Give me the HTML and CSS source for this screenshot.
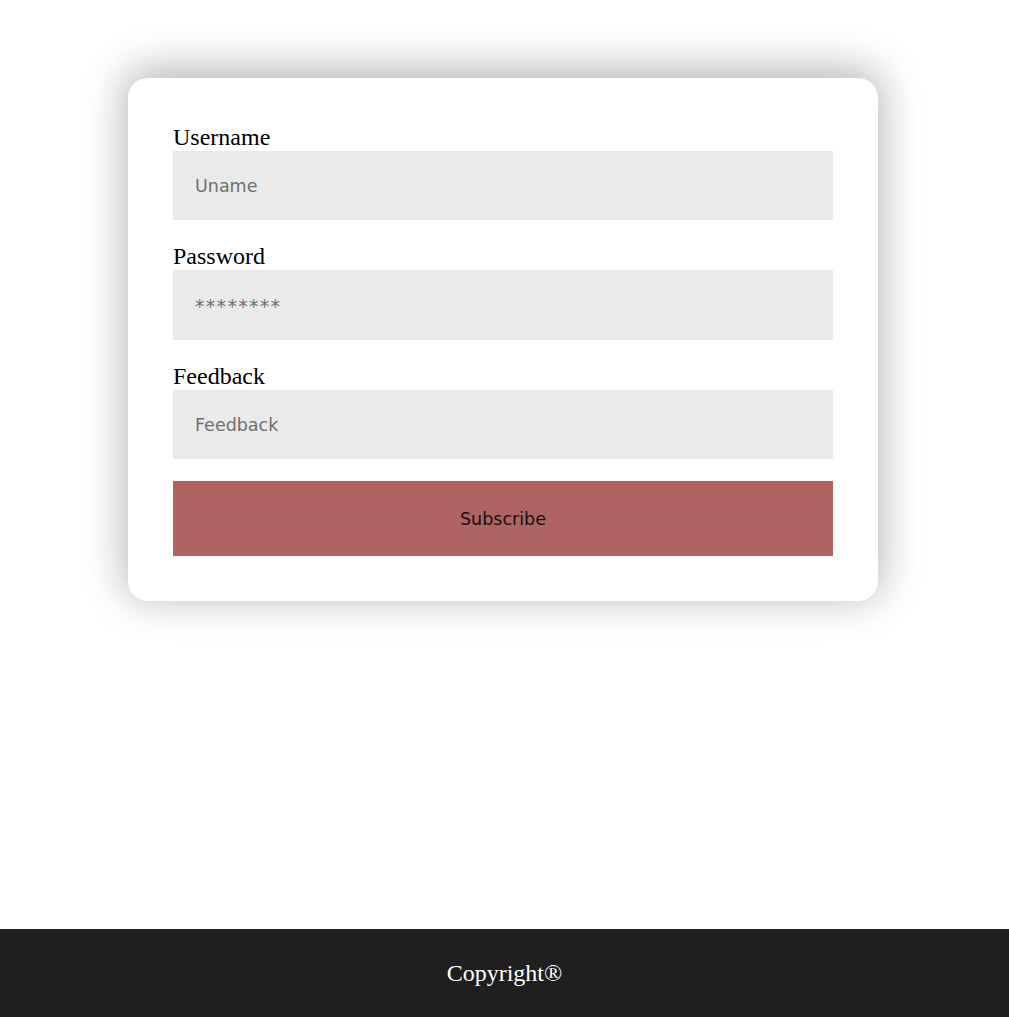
FILE: index.html
```html
<!DOCTYPE html>
<html>
<head>
<meta charset="utf-8">
<link rel="stylesheet" href="styles.css">
</head>
<body>
<main class="main">
  <form class="card">
    <label class="label" for="u">Username</label>
    <input class="field" id="u" type="text" placeholder="Uname">
    <label class="label" for="p">Password</label>
    <input class="field field-secret" id="p" type="text" placeholder="********">
    <label class="label" for="f">Feedback</label>
    <input class="field" id="f" type="text" placeholder="Feedback">
    <button class="btn" type="button">Subscribe</button>
  </form>
</main>
<footer class="footer">Copyright®</footer>
</body>
</html>
```
FILE: styles.css
```css
html, body {
  margin: 0;
  padding: 0;
}
body {
  font-family: "Liberation Serif", "Times New Roman", serif;
  background: #fff;
  min-height: 100vh;
  display: flex;
  flex-direction: column;
}
.main {
  flex: 1;
  display: flex;
  justify-content: center;
  align-items: flex-start;
  padding-top: 78px;
  padding-right: 3px;
}
.card {
  width: 660px;
  padding: 45px;
  background: #fff;
  border-radius: 20px;
  box-shadow: 0 -6px 40px 4px rgba(0, 0, 0, 0.28);
  display: flex;
  flex-direction: column;
}
.label {
  font-size: 24px;
  line-height: 28px;
  color: #000;
}
.field {
  height: 69.4px;
  box-sizing: border-box;
  border: none;
  outline: none;
  background: #eaeaea;
  padding: 1px 22px 0;
  margin: 0 0 22px 0;
  font-family: "DejaVu Sans", Verdana, sans-serif;
  font-size: 17.5px;
  color: #333;
}
.field::placeholder {
  color: #6f6f6f;
}
.field-secret {
  font-size: 19px;
  letter-spacing: 1.3px;
}
.btn {
  height: 75px;
  border: none;
  background: #b06462;
  font-family: "DejaVu Sans", Verdana, sans-serif;
  font-size: 17.5px;
  color: #111;
  padding: 1px 0 0;
  cursor: pointer;
}
.footer {
  height: 88px;
  background: #1f1f1f;
  color: #fff;
  display: flex;
  align-items: center;
  justify-content: center;
  font-size: 24px;
}
```
